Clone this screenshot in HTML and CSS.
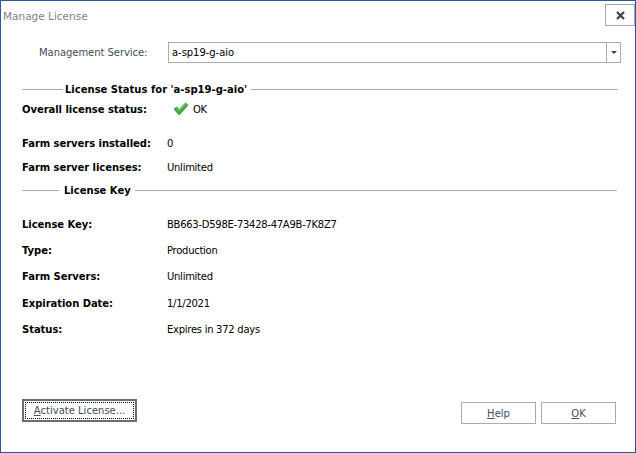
FILE: index.html
```html
<!DOCTYPE html>
<html lang="en">
<head>
<meta charset="utf-8">
<title>Manage License</title>
<link rel="stylesheet" href="styles.css">
</head>
<body>
<div class="window">
  <header class="titlebar">
    <span class="title">Manage License</span>
    <button class="close" aria-label="Close">
      <svg width="9" height="9" viewBox="0 0 9 9"><path d="M1 1l7 7M8 1L1 8" stroke="#404040" stroke-width="2.2" fill="none"/></svg>
    </button>
  </header>
  <div class="service">
    <span class="service-label">Management Service:</span>
    <div class="combo">
      <span class="combo-value">a-sp19-g-aio</span>
      <span class="combo-arrow"></span>
    </div>
  </div>
  <div class="section section-status"><span class="lead lead-status"></span><span class="section-title">License Status for 'a-sp19-g-aio'</span><span class="rule"></span></div>
  <div class="row row-overall"><span class="key">Overall license status:</span>
    <span class="val val-ok">
      <svg class="check" width="16" height="14" viewBox="0 0 16 14"><path d="M1 7.2l2.6-2.3 2.5 2.5L12.6 1 15 3.2 6.2 13z" fill="#3fae3a" stroke="#2b8f2b" stroke-width=".7"/><path d="M3.6 6l2.6 2.6L12.7 2.2" stroke="#8ad67f" stroke-width=".8" fill="none"/></svg>
      OK</span></div>
  <div class="row row-installed"><span class="key">Farm servers installed:</span><span class="val">0</span></div>
  <div class="row row-licenses"><span class="key">Farm server licenses:</span><span class="val">Unlimited</span></div>
  <div class="section section-key"><span class="lead lead-key"></span><span class="section-title">License Key</span><span class="rule"></span></div>
  <div class="row row-lk"><span class="key">License Key:</span><span class="val">BB663-D598E-73428-47A9B-7K8Z7</span></div>
  <div class="row row-n"><span class="key">Type:</span><span class="val">Production</span></div>
  <div class="row row-n"><span class="key">Farm Servers:</span><span class="val">Unlimited</span></div>
  <div class="row row-n"><span class="key">Expiration Date:</span><span class="val">1/1/2021</span></div>
  <div class="row row-n"><span class="key">Status:</span><span class="val">Expires in 372 days</span></div>
  <footer class="footer">
    <button class="btn btn-default"><span class="focus"><u>A</u>ctivate License...</span></button>
    <div class="footer-right">
      <button class="btn"><u>H</u>elp</button>
      <button class="btn"><u>O</u>K</button>
    </div>
  </footer>
</div>
</body>
</html>
```
FILE: styles.css
```css
* { box-sizing: border-box; }
html, body { margin: 0; padding: 0; background: #fff; }
body { font-family: "DejaVu Sans", sans-serif; font-size: 10px; color: #000; }
.window {
  width: 636px; height: 453px;
  border: 1px solid #2b579a;
  display: flex; flex-direction: column;
  background: #fff; overflow: hidden;
}
.titlebar { height: 41px; display: flex; justify-content: space-between; padding: 3px 0 0 2px; }
.title { color: #7f7f7f; font-size: 10.5px; line-height: 24px; }
.close {
  width: 30px; height: 22px; margin: 0; padding: 0;
  background: #fff; border: 1px solid #a8a8a8;
  display: flex; align-items: center; justify-content: center;
}
.service { display: flex; align-items: center; height: 21px; }
.service-label { width: 167px; padding-left: 38px; color: #444c5e; letter-spacing: -.05px; }
.combo {
  width: 453px; height: 21px; border: 1px solid #ababab;
  display: flex; align-items: center; justify-content: space-between;
}
.combo-value { padding-left: 3px; letter-spacing: -.05px; }
.combo-arrow {
  width: 14px; height: 19px; border-left: 1px solid #ababab;
  display: flex; align-items: center; justify-content: center;
}
.combo-arrow::after {
  content: ""; border: 3px solid transparent; border-top: 3px solid #404040; border-bottom: 0;
}
.section { display: flex; align-items: center; font-weight: 700; height: 14px; color: #000; margin-left: 21px; width: 596px; }
.section-status { margin-top: 19px; }
.section-key { margin-top: 9px; width: 595px; }
.lead, .rule { height: 1px; background: #ababab; display: block; }
.rule { flex: 1; }
.lead-status { width: 41px; margin-right: 2px; }
.lead-key { width: 37px; margin-right: 5px; }
.section-title { margin-right: 4px; }
.row { display: flex; align-items: center; height: 14px; padding-left: 21px; }
.key { width: 145px; font-weight: 700; color: #000; white-space: nowrap; letter-spacing: -.05px; }
.val { letter-spacing: -.27px; }
.val-ok { display: flex; align-items: center; gap: 4px; padding-left: 6px; }
.row-overall { margin-top: 6px; }
.row-installed { margin-top: 20px; }
.row-licenses { margin-top: 10px; }
.row-lk { margin-top: 20px; }
.row-n { margin-top: 12.4px; }
.footer { margin-top: auto; display: flex; justify-content: space-between; align-items: flex-end; padding: 0 19px 28px 21px; }
.footer-right { display: flex; gap: 5px; }
.btn {
  width: 75px; height: 22px; padding: 0; background: #fff; border: 1px solid #ababab;
  font: inherit; color: #444c5e;
}
.btn-default { width: 115px; height: 23px; border: 2px solid #6d6d6d; padding: 1px; margin-bottom: 2px; }
.focus { display: flex; align-items: center; justify-content: center; height: 100%; border: 1px dotted #000; }
```
